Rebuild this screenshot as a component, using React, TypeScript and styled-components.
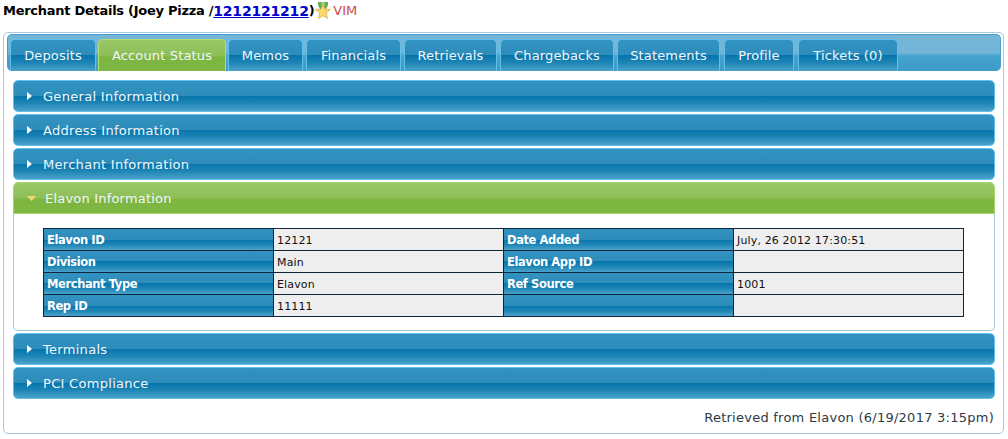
import React from 'react';
import styled, { createGlobalStyle } from 'styled-components';

const blueBar = 'linear-gradient(#3292c1 0%, #2d8cba 50%, #0675ac 50%, #1f86b6 75%, #4ba3ca 100%)';
const greenBar = 'linear-gradient(#98c765 0%, #8dbf58 50%, #7cb53f 56%, #7eb742 100%)';

const GlobalStyle = createGlobalStyle`
  html, body {
    margin: 0;
    padding: 0;
    background: #fff;
    font-family: "DejaVu Sans", Verdana, sans-serif;
  }
`;

const Page = styled.div`
  width: 1008px;
  height: 439px;
  overflow: hidden;
  padding: 0 4px 0 3px;
  box-sizing: border-box;
`;

const Heading = styled.div`
  display: flex;
  align-items: center;
  height: 32px;
  padding: 0 0 11px 0;
  box-sizing: border-box;
  font-size: 13px;
  font-weight: bold;
  letter-spacing: -0.27px;
  color: #000;
  white-space: nowrap;
`;

const MerchantLink = styled.a`
  color: #0000cc;
  text-decoration: underline;
  font-size: 14px;
  letter-spacing: -0.2px;
`;

const Vim = styled.span`
  color: #d04848;
  font-size: 13px;
  font-weight: normal;
  letter-spacing: 0;
`;

const Star = styled.svg`
  width: 16px;
  height: 17px;
  margin: 0 2px 0 1px;
`;

const Panel = styled.div`
  height: 402px;
  border: 1px solid #a6c9e2;
  border-radius: 5px;
  padding: 1px 2px 1px 3px;
  box-sizing: border-box;
`;

const TabBar = styled.div`
  display: flex;
  gap: 2px;
  height: 37px;
  padding: 4px 0 0 2px;
  box-sizing: border-box;
  border: 1px solid #4a9bd0;
  border-bottom: none;
  border-radius: 5px;
  background: linear-gradient(#74b6d8 0%, #72b5d7 50%, #45a2ce 58%, #3d9cc9 100%);
`;

const Tab = styled.div<{ $active?: boolean; $width: number; $after: number }>`
  width: ${(p) => p.$width}px;
  margin-right: ${(p) => p.$after}px;
  height: 32px;
  box-sizing: border-box;
  display: flex;
  align-items: center;
  justify-content: center;
  padding-bottom: 1px;
  border: 1px solid ${(p) => (p.$active ? '#b4dc74' : '#62bfe8')};
  border-bottom: none;
  border-radius: 5px 5px 0 0;
  background: ${(p) => (p.$active ? greenBar : blueBar)};
  color: #f0f6fa;
  font-size: 13px;
  letter-spacing: 0.15px;
  white-space: nowrap;
`;

const Stack = styled.div`
  display: flex;
  flex-direction: column;
  gap: 2px;
  margin: 9px 6px 0 6px;
`;

const AccordionHeader = styled.div<{ $open?: boolean }>`
  height: 32px;
  box-sizing: border-box;
  display: flex;
  align-items: center;
  gap: ${(p) => (p.$open ? 9 : 11)}px;
  padding: 0 0 0 13px;
  border: 1px solid ${(p) => (p.$open ? '#a9d66a' : '#62bfe8')};
  border-radius: ${(p) => (p.$open ? '5px 5px 0 0' : '5px')};
  background: ${(p) => (p.$open ? greenBar : blueBar)};
  color: #f0f6fa;
  font-size: 13px;
  letter-spacing: ${(p) => (p.$open ? 0.2 : 0.3)}px;
`;

const Arrow = styled.svg<{ $open?: boolean }>`
  width: ${(p) => (p.$open ? 9 : 5)}px;
  height: ${(p) => (p.$open ? 5 : 8)}px;
  flex: none;
`;

const AccordionBody = styled.div`
  height: 117px;
  box-sizing: border-box;
  margin-top: -2px;
  padding: 14px 30px 0 29px;
  border: 1px solid #a6c9e2;
  border-top: none;
  border-radius: 0 0 5px 5px;
`;

const InfoGrid = styled.div`
  display: grid;
  grid-template-columns: repeat(4, 230px);
  grid-auto-rows: 22px;
  width: 921px;
  box-sizing: border-box;
  border-top: 1px solid #10263a;
  border-left: 1px solid #10263a;
`;

const Label = styled.div`
  box-sizing: border-box;
  border-right: 1px solid #10263a;
  border-bottom: 1px solid #10263a;
  padding-left: 3px;
  display: flex;
  align-items: center;
  background: ${blueBar};
  color: #fff;
  font-size: 11.5px;
  letter-spacing: -0.4px;
  font-weight: bold;
  white-space: nowrap;
`;

const Value = styled.div`
  box-sizing: border-box;
  border-right: 1px solid #10263a;
  border-bottom: 1px solid #10263a;
  padding: 1px 0 0 3px;
  display: flex;
  align-items: center;
  background: #eeeeee;
  color: #111;
  font-size: 11px;
  letter-spacing: 0.15px;
  white-space: nowrap;
`;

const Footer = styled.div`
  margin: 11px 7px 0 0;
  text-align: right;
  font-size: 13px;
  letter-spacing: 0.25px;
  color: #2e3a46;
`;

const tabs = [
  { name: 'Deposits', width: 86, after: 0 },
  { name: 'Account Status', width: 128, after: 0, active: true },
  { name: 'Memos', width: 75, after: 1 },
  { name: 'Financials', width: 95, after: 1 },
  { name: 'Retrievals', width: 93, after: 1 },
  { name: 'Chargebacks', width: 114, after: 1 },
  { name: 'Statements', width: 103, after: 2 },
  { name: 'Profile', width: 70, after: 2 },
  { name: 'Tickets (0)', width: 100, after: 0 },
];

const rows = [
  ['Elavon ID', '12121', 'Date Added', 'July, 26 2012 17:30:51'],
  ['Division', 'Main', 'Elavon App ID', ''],
  ['Merchant Type', 'Elavon', 'Ref Source', '1001'],
  ['Rep ID', '11111', '', ''],
];

const Section = ({ title, open }: { title: string; open?: boolean }) => (
  <AccordionHeader $open={open}>
    {open ? (
      <Arrow $open viewBox="0 0 9 5">
        <path d="M0 0h9L4.5 5z" fill="#f5d76e" />
      </Arrow>
    ) : (
      <Arrow viewBox="0 0 5 8">
        <path d="M0 0l5 4-5 4z" fill="#fff" />
      </Arrow>
    )}
    {title}
  </AccordionHeader>
);

export default function App() {
  return (
    <Page>
      <GlobalStyle />
      <Heading>
        Merchant Details (Joey Pizza /<MerchantLink href="#">1212121212</MerchantLink>)
        <Star viewBox="0 0 16 17">
          <path d="M3 0h10v3l-2 4H5L3 3z" fill="#62ad4c" />
          <path d="M6.500 0h3v4h-3z" fill="#a5d88a" />
          <path
            d="M8 2.500l2 4.500 5.500.6-4.100 3.500 1.200 5.400L8 13.700l-4.600 2.800 1.200-5.400L.5 7.600 6 7z"
            fill="#f9d86f"
            stroke="#dca94e"
            strokeWidth="0.7"
          />
        </Star>
        <Vim>VIM</Vim>
      </Heading>
      <Panel>
        <TabBar>
          {tabs.map((t) => (
            <Tab key={t.name} $active={t.active} $width={t.width} $after={t.after}>
              {t.name}
            </Tab>
          ))}
        </TabBar>
        <Stack>
          <Section title="General Information" />
          <Section title="Address Information" />
          <Section title="Merchant Information" />
          <Section title="Elavon Information" open />
          <AccordionBody>
            <InfoGrid>
              {rows.map((r, i) => (
                <React.Fragment key={i}>
                  <Label>{r[0]}</Label>
                  <Value>{r[1]}</Value>
                  <Label>{r[2]}</Label>
                  <Value>{r[3]}</Value>
                </React.Fragment>
              ))}
            </InfoGrid>
          </AccordionBody>
          <Section title="Terminals" />
          <Section title="PCI Compliance" />
        </Stack>
        <Footer>Retrieved from Elavon (6/19/2017 3:15pm)</Footer>
      </Panel>
    </Page>
  );
}
